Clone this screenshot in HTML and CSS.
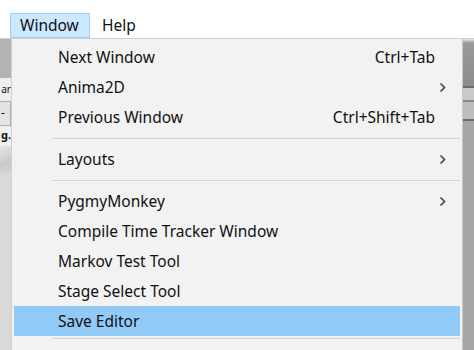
FILE: index.html
```html
<!DOCTYPE html>
<html lang="en">
<head>
  <meta charset="UTF-8">
  <title>Window menu</title>
  <link rel="stylesheet" href="styles.css">
</head>
<body>
  <header class="menubar">
    <div class="menubar-item active">Window</div>
    <div class="menubar-item">Help</div>
  </header>
  <div class="workspace">
    <div class="gutter">
      <div class="g-bar"></div>
      <div class="g-label">ar</div>
      <div class="g-button">-</div>
      <div class="g-bold">g.</div>
      <div class="g-bevel"></div>
      <div class="g-rest"></div>
    </div>
    <nav class="menu">
      <div class="item"><span class="label">Next Window</span><span class="shortcut">Ctrl+Tab</span><span class="arrow"></span></div>
      <div class="item"><span class="label">Anima2D</span><span class="shortcut"></span><span class="arrow"><svg width="7" height="11" viewBox="0 0 7 11"><path d="M1.5 1.5 L5.5 5.5 L1.5 9.5" fill="none" stroke="#444" stroke-width="1.6"/></svg></span></div>
      <div class="item"><span class="label">Previous Window</span><span class="shortcut">Ctrl+Shift+Tab</span><span class="arrow"></span></div>
      <div class="separator"></div>
      <div class="item"><span class="label">Layouts</span><span class="shortcut"></span><span class="arrow"><svg width="7" height="11" viewBox="0 0 7 11"><path d="M1.5 1.5 L5.5 5.5 L1.5 9.5" fill="none" stroke="#444" stroke-width="1.6"/></svg></span></div>
      <div class="separator"></div>
      <div class="item"><span class="label">PygmyMonkey</span><span class="shortcut"></span><span class="arrow"><svg width="7" height="11" viewBox="0 0 7 11"><path d="M1.5 1.5 L5.5 5.5 L1.5 9.5" fill="none" stroke="#444" stroke-width="1.6"/></svg></span></div>
      <div class="item"><span class="label">Compile Time Tracker Window</span><span class="shortcut"></span><span class="arrow"></span></div>
      <div class="item"><span class="label">Markov Test Tool</span><span class="shortcut"></span><span class="arrow"></span></div>
      <div class="item"><span class="label">Stage Select Tool</span><span class="shortcut"></span><span class="arrow"></span></div>
      <div class="item selected"><span class="label">Save Editor</span><span class="shortcut"></span><span class="arrow"></span></div>
      <div class="separator bottom"></div>
    </nav>
    <div class="shade">
      <div class="s-top"></div>
      <div class="s-line"></div>
      <div class="s-mid"></div>
      <div class="s-line light"></div>
      <div class="s-mid2"></div>
      <div class="s-line"></div>
      <div class="s-rest"></div>
    </div>
  </div>
</body>
</html>
```

FILE: styles.css
```css
* {
  margin: 0;
  padding: 0;
  box-sizing: border-box;
}
body {
  width: 474px;
  height: 350px;
  overflow: hidden;
  background: #ffffff;
  font-family: 'Noto Sans', 'Open Sans', sans-serif;
  font-size: 15.5px;
  color: #111;
}
.menubar {
  height: 38px;
  display: flex;
  align-items: flex-end;
  padding-left: 10px;
  background: #fff;
}
.menubar-item {
  height: 25px;
  line-height: 23px;
  padding: 0 9px 0 9px;
  border: 1px solid transparent;
  margin-right: 2px;
}
.menubar-item.active {
  background: #cce8ff;
  border-color: #99d1ff;
  width: 80px;
}
.workspace {
  display: flex;
  height: 312px;
  border-top: 1px solid #cfcfcf;
}
.gutter {
  width: 11px;
  display: flex;
  flex-direction: column;
  overflow: hidden;
}
.g-bar { height: 39px; background: #b3b3b3; }
.g-label {
  height: 23px;
  background: #efefef;
  font-size: 10px;
  line-height: 23px;
  text-align: right;
}
.g-button {
  height: 25px;
  background: #e3e3e3;
  border: 1px solid #adadad;
  border-left: none;
  font-size: 12px;
  line-height: 22px;
  padding-left: 1px;
}
.g-bold {
  height: 20px;
  background: #f0f0f0;
  font-weight: bold;
  font-size: 11px;
  line-height: 18px;
  text-align: right;
}
.g-bevel {
  height: 28px;
  background: linear-gradient(160deg, #e6e6e6 0%, #c9c9c9 60%, #d6d6d6 100%);
}
.g-rest { flex: 1; background: #d9d9d9; }
.menu {
  width: 452px;
  background: #f2f2f2;
  border-left: 1px solid #d0d0d0;
  border-right: 1px solid #c8c8c8;
  padding-top: 3px;
}
.item {
  height: 30px;
  margin: 0 2px;
  padding-left: 44px;
  display: grid;
  grid-template-columns: 1fr auto 25px;
  align-items: center;
}
.item.selected { background: #91c9f7; }
.shortcut { text-align: right; }
.arrow {
  display: flex;
  align-items: center;
  padding-left: 4px;
  height: 11px;
}
.separator {
  height: 12px;
  margin: 0 2px 0 40px;
  padding-top: 6px;
}
.separator::after {
  content: "";
  display: block;
  height: 1px;
  background: #d4d4d4;
}
.separator.bottom { padding-top: 2px; }
.shade {
  flex: 1;
  display: flex;
  flex-direction: column;
  box-shadow: inset 3px 0 3px rgba(0, 0, 0, 0.12);
}
.s-top {
  height: 47px;
  background: linear-gradient(to bottom, #e8e8e8 0, #9a9a9a 4px, #8c8c8c 100%);
}
.s-line { height: 2px; background: #6c6c6c; }
.s-line.light { background: #8a8a8a; }
.s-mid { height: 12px; background: #c9c9c9; }
.s-mid2 { height: 17px; background: #bdbdbd; }
.s-rest { flex: 1; background: #a6a6a6; }
```
